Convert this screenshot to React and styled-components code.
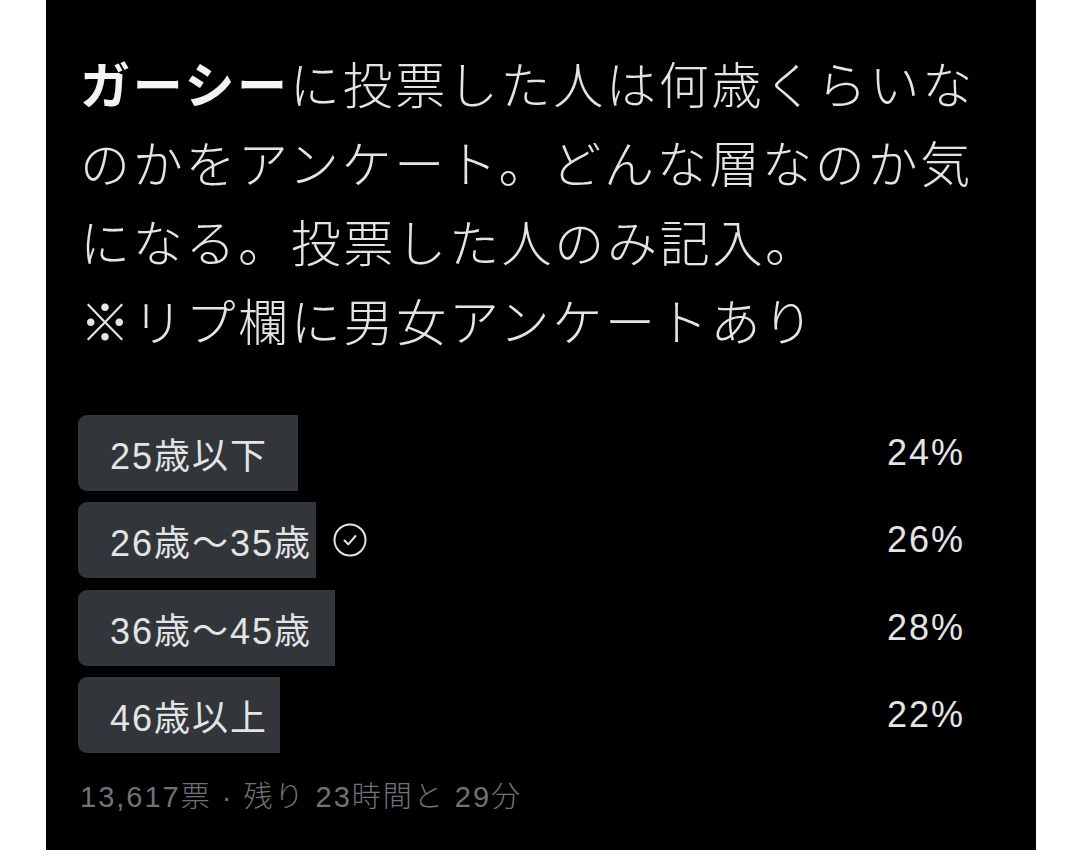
import React from 'react'
import styled, { createGlobalStyle } from 'styled-components'

const GlobalStyle = createGlobalStyle`
  html, body {
    margin: 0;
    padding: 0;
    background: #ffffff;
  }
  body {
    font-family: "Noto Sans CJK JP", "Noto Sans", sans-serif;
  }
`

const Page = styled.div`
  width: 1080px;
  height: 861px;
  background: #ffffff;
`

const Panel = styled.main`
  box-sizing: border-box;
  width: 990px;
  height: 850px;
  margin-left: 46px;
  background: #000000;
  padding: 43px 71px 0 32px;
  display: flex;
  flex-direction: column;
`

const TweetText = styled.p`
  margin: 0;
  padding-left: 2px;
  font-size: 50px;
  font-weight: 300;
  line-height: 79px;
  letter-spacing: 2.7px;
  color: #e2e4e5;
  white-space: nowrap;
`

const Strong = styled.span`
  font-weight: 700;
  color: #f2f3f3;
`

const Poll = styled.div`
  margin-top: 56px;
  display: flex;
  flex-direction: column;
  gap: 11.3px;
`

const Row = styled.div`
  position: relative;
  height: 76px;
  display: flex;
  align-items: center;
  justify-content: space-between;
`

const Fill = styled.div`
  position: absolute;
  left: 0;
  top: 0;
  bottom: 0;
  background: #32363a;
  border-radius: 9px 0 0 9px;
`

const Label = styled.div`
  position: relative;
  display: flex;
  align-items: center;
  gap: 20px;
  padding-left: 32px;
  font-family: "Liberation Sans", "Noto Sans CJK JP", sans-serif;
  font-size: 36px;
  letter-spacing: 2px;
  color: #e2e4e5;
`

const Percent = styled.div`
  position: relative;
  font-family: "Liberation Sans", "Noto Sans CJK JP", sans-serif;
  font-size: 36px;
  letter-spacing: 2px;
  color: #e2e4e5;
`

const Footer = styled.div`
  margin-top: 24px;
  padding-left: 2px;
  font-family: "Liberation Sans", "Noto Sans CJK JP", sans-serif;
  font-size: 29px;
  font-weight: 300;
  line-height: 40px;
  color: #6f7378;
  letter-spacing: 2px;
`

const CheckIcon = () => (
  <svg width="36" height="36" viewBox="0 0 36 36" fill="none" stroke="#e2e4e5" strokeWidth="2" strokeLinecap="round" strokeLinejoin="round">
    <circle cx="18" cy="18" r="15.5" />
    <path d="M12.5 18.5l3.8 3.8L23.5 14" />
  </svg>
)

const options = [
  { label: '25歳以下', pct: 24 },
  { label: '26歳〜35歳', pct: 26, voted: true },
  { label: '36歳〜45歳', pct: 28 },
  { label: '46歳以上', pct: 22 },
]

export default function App() {
  return (
    <Page>
      <GlobalStyle />
      <Panel>
        <TweetText>
          <Strong>ガーシー</Strong>に投票した人は何歳くらいな<br />
          のかをアンケート。どんな層なのか気<br />
          になる。投票した人のみ記入。<br />
          ※リプ欄に男女アンケートあり
        </TweetText>
        <Poll>
          {options.map((o) => (
            <Row key={o.label}>
              <Fill style={{ width: `${o.pct * 9.17}px` }} />
              <Label>
                {o.label}
                {o.voted && <CheckIcon />}
              </Label>
              <Percent>{o.pct}%</Percent>
            </Row>
          ))}
        </Poll>
        <Footer>13,617票 · 残り 23時間と 29分</Footer>
      </Panel>
    </Page>
  )
}
